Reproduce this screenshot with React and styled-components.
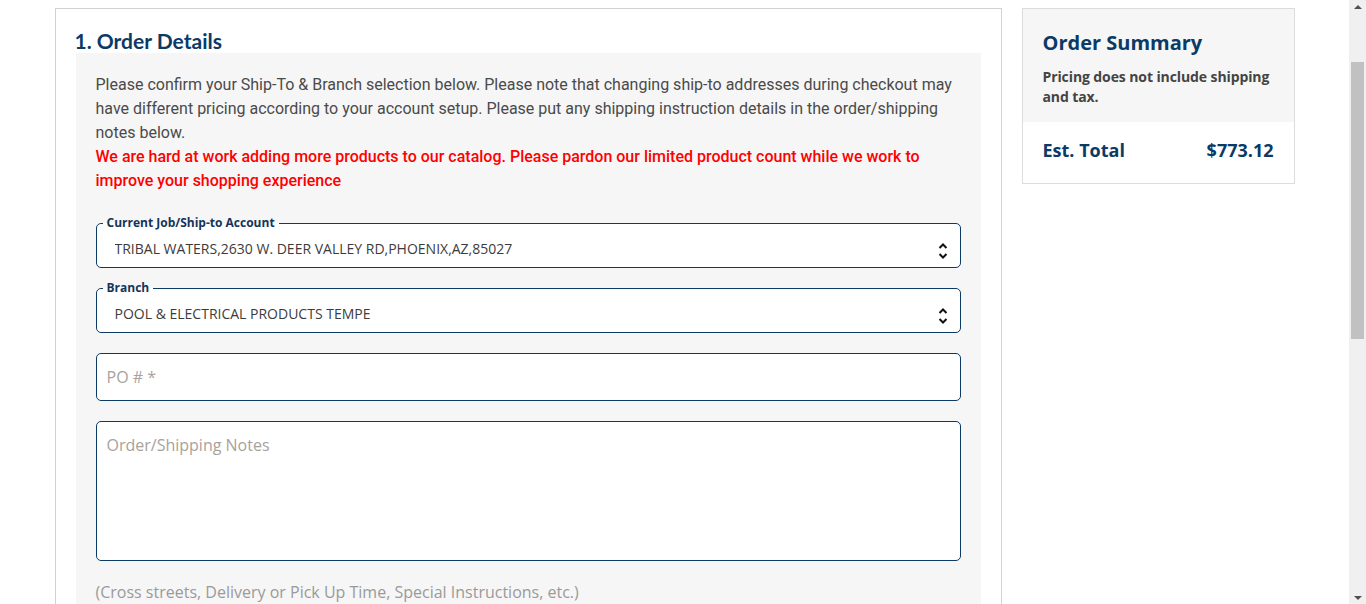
import React from 'react';
import styled, { createGlobalStyle } from 'styled-components';

const GlobalStyle = createGlobalStyle`
  html, body {
    margin: 0;
    padding: 0;
    background: #ffffff;
  }
  body {
    font-family: 'Open Sans', 'Liberation Sans', sans-serif;
    color: #333;
  }
  * {
    box-sizing: border-box;
  }
`;

// content is centred in the area left of the scrollbar
const Viewport = styled.div`
  padding-right: 17px;
`;

const Page = styled.div`
  width: 1240px;
  margin: 0 auto;
  padding: 8px 0 40px;
  display: flex;
  align-items: flex-start;
  gap: 20px;
`;

const MainCard = styled.section`
  flex: 0 0 947px;
  border: 1px solid #d2d2d2;
  padding: 20px;
`;

const SectionTitle = styled.h2`
  margin: 0;
  font-family: 'Lato', 'Open Sans', sans-serif;
  font-weight: 700;
  font-size: 21px;
  line-height: 24px;
  color: #0b3a66;
  margin-left: -1px;
`;

const FormPanel = styled.div`
  background: #f6f6f6;
  padding: 20px 20px 20px;
`;

const Intro = styled.p`
  margin: 0 0 22px;
  font-family: 'Roboto', 'Liberation Sans', sans-serif;
  font-size: 16px;
  line-height: 24px;
  color: #4a4a4a;
`;

const Notice = styled.span`
  display: block;
  color: #ff0000;
  font-weight: 500;
`;

const Fieldset = styled.fieldset`
  position: relative;
  margin: 0 0 12px;
  padding: 0 6px 1px;
  border: 1px solid #0b3a66;
  border-radius: 5px;
  background: #ffffff;
  min-width: 0;
`;

const Legend = styled.legend`
  padding: 0 4px;
  font-size: 12px;
  line-height: 16px;
  font-weight: 700;
  color: #15345a;
`;

const Select = styled.select`
  display: block;
  width: 100%;
  height: 35px;
  margin: 0;
  padding: 0 30px 0 12px;
  border: none;
  background: transparent;
  appearance: none;
  -webkit-appearance: none;
  font-family: 'Open Sans', 'Liberation Sans', sans-serif;
  font-size: 14px;
  color: #3c3c3c;
  outline: none;
`;

const SelectIcon = styled.svg`
  position: absolute;
  right: 12px;
  bottom: 6px;
  pointer-events: none;
`;

const TextInput = styled.input`
  display: block;
  width: 100%;
  height: 48px;
  margin: 20px 0 20px;
  padding: 0 10px;
  border: 1px solid #0b3a66;
  border-radius: 5px;
  background: #ffffff;
  font-family: 'Open Sans', 'Liberation Sans', sans-serif;
  font-size: 16px;
  color: #333;
  outline: none;

  &::placeholder {
    color: #a8a29c;
  }
`;

const NotesArea = styled.textarea`
  display: block;
  width: 100%;
  height: 140px;
  margin: 0 0 19px;
  padding: 11px 10px;
  border: 1px solid #0b3a66;
  border-radius: 5px;
  background: #ffffff;
  resize: none;
  font-family: 'Open Sans', 'Liberation Sans', sans-serif;
  font-size: 16px;
  line-height: 24px;
  color: #333;
  outline: none;

  &::placeholder {
    color: #a8a29c;
  }
`;

const Hint = styled.p`
  margin: 0;
  font-size: 16px;
  line-height: 24px;
  color: #9a9a9a;
`;

const SummaryCard = styled.aside`
  flex: 0 0 273px;
  border: 1px solid #dcdcdc;
`;

const SummaryHead = styled.div`
  background: #f6f6f6;
  padding: 20px 20px 15px;
`;

const SummaryTitle = styled.h3`
  margin: 0 0 10px;
  font-size: 20px;
  line-height: 28px;
  font-weight: 700;
  color: #0b3a66;
`;

const SummaryNote = styled.p`
  margin: 0;
  font-size: 14px;
  line-height: 20px;
  font-weight: 700;
  color: #444;
  letter-spacing: -0.1px;
`;

const TotalRow = styled.div`
  display: flex;
  justify-content: space-between;
  align-items: center;
  padding: 16px 20px 21px;
  font-size: 18px;
  line-height: 24px;
  font-weight: 700;
  color: #0b3a66;
`;

const Scrollbar = styled.div`
  position: fixed;
  top: 0;
  right: 0;
  bottom: 0;
  width: 17px;
  background: #f0f0f0;
  display: flex;
  flex-direction: column;
  align-items: center;
`;

const ScrollArrow = styled.div`
  flex: 0 0 17px;
  display: flex;
  align-items: center;
  justify-content: center;
  padding: ${(p) => (p.$down ? '4px 0 0' : '0 0 3px')};
`;

const ScrollTrack = styled.div`
  flex: 1;
  width: 100%;
  padding: 45px 2px 0;
`;

const ScrollThumb = styled.div`
  height: 277px;
  background: #c1c1c1;
`;

const Chevrons = () => (
  <SelectIcon width="10" height="20" viewBox="0 0 10 20" fill="none">
    <path d="M1.5 7 L5 3.5 L8.5 7" stroke="#111" strokeWidth="2" />
    <path d="M1.5 13 L5 16.5 L8.5 13" stroke="#111" strokeWidth="2" />
  </SelectIcon>
);

const Triangle = ({ down }) => (
  <svg width="8" height="4" viewBox="0 0 8 4">
    <path d={down ? 'M0 0 H8 L4 4 Z' : 'M0 4 H8 L4 0 Z'} fill="#505050" />
  </svg>
);

const App = () => {
  return (
    <>
      <GlobalStyle />
      <Viewport>
        <Page>
          <MainCard>
            <SectionTitle>1. Order Details</SectionTitle>
            <FormPanel>
              <Intro>
                Please confirm your Ship-To &amp; Branch selection below. Please note that changing
                ship-to addresses during checkout may have different pricing according to your
                account setup. Please put any shipping instruction details in the order/shipping
                notes below.
                <Notice>
                  We are hard at work adding more products to our catalog. Please pardon our limited
                  product count while we work to improve your shopping experience
                </Notice>
              </Intro>

              <Fieldset>
                <Legend>Current Job/Ship-to Account</Legend>
                <Select defaultValue="tribal">
                  <option value="tribal">TRIBAL WATERS,2630 W. DEER VALLEY RD,PHOENIX,AZ,85027</option>
                </Select>
                <Chevrons />
              </Fieldset>

              <Fieldset>
                <Legend>Branch</Legend>
                <Select defaultValue="tempe">
                  <option value="tempe">POOL &amp; ELECTRICAL PRODUCTS TEMPE</option>
                </Select>
                <Chevrons />
              </Fieldset>

              <TextInput type="text" placeholder="PO # *" />
              <NotesArea placeholder="Order/Shipping Notes" />
              <Hint>(Cross streets, Delivery or Pick Up Time, Special Instructions, etc.)</Hint>
            </FormPanel>
          </MainCard>

          <SummaryCard>
            <SummaryHead>
              <SummaryTitle>Order Summary</SummaryTitle>
              <SummaryNote>Pricing does not include shipping and tax.</SummaryNote>
            </SummaryHead>
            <TotalRow>
              <span>Est. Total</span>
              <span>$773.12</span>
            </TotalRow>
          </SummaryCard>
        </Page>
      </Viewport>

      <Scrollbar>
        <ScrollArrow>
          <Triangle />
        </ScrollArrow>
        <ScrollTrack>
          <ScrollThumb />
        </ScrollTrack>
        <ScrollArrow $down>
          <Triangle down />
        </ScrollArrow>
      </Scrollbar>
    </>
  );
};

export default App;
